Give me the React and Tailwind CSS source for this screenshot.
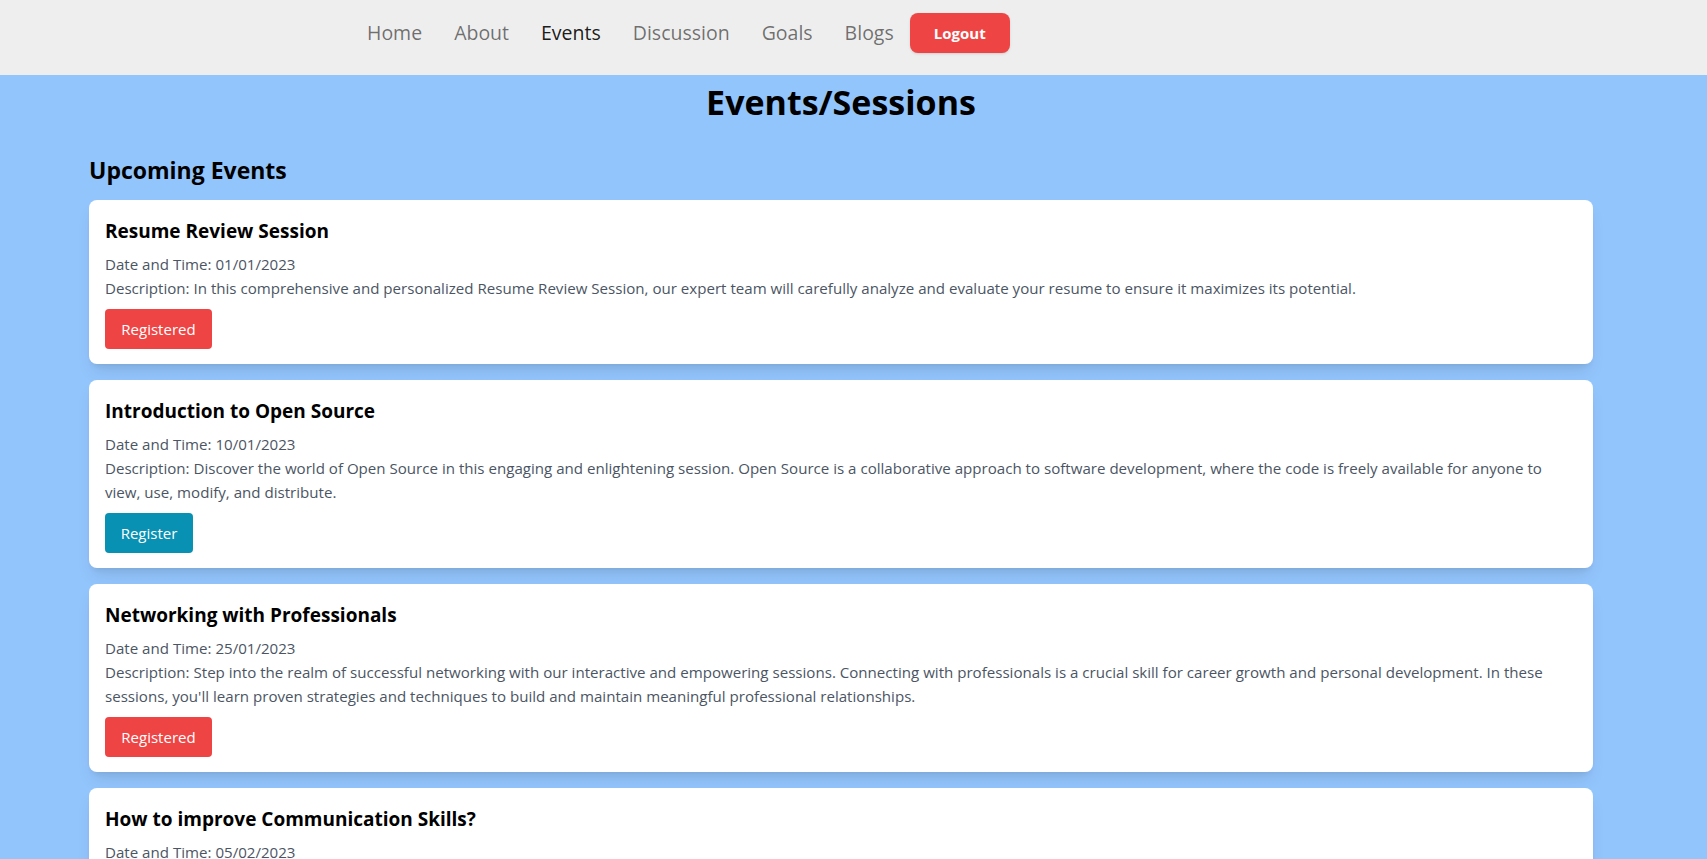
import React from 'react';

const font = { fontFamily: '"Segoe UI", "Open Sans", "Liberation Sans", sans-serif' };

const navLinks = ['Home', 'About', 'Events', 'Discussion', 'Goals', 'Blogs'];

const events = [
  {
    title: 'Resume Review Session',
    date: '01/01/2023',
    description:
      'In this comprehensive and personalized Resume Review Session, our expert team will carefully analyze and evaluate your resume to ensure it maximizes its potential.',
    registered: true,
  },
  {
    title: 'Introduction to Open Source',
    date: '10/01/2023',
    description:
      'Discover the world of Open Source in this engaging and enlightening session. Open Source is a collaborative approach to software development, where the code is freely available for anyone to view, use, modify, and distribute.',
    registered: false,
  },
  {
    title: 'Networking with Professionals',
    date: '25/01/2023',
    description:
      "Step into the realm of successful networking with our interactive and empowering sessions. Connecting with professionals is a crucial skill for career growth and personal development. In these sessions, you'll learn proven strategies and techniques to build and maintain meaningful professional relationships.",
    registered: true,
  },
  {
    title: 'How to improve Communication Skills?',
    date: '05/02/2023',
    description:
      'Learn how to express your ideas clearly and confidently, listen actively, and build strong connections with the people around you.',
    registered: false,
  },
];

const EventCard = ({ event }) => (
  <div className="bg-white rounded-lg shadow-lg px-4 pt-[17px] pb-[15px] mb-4">
    <h3 className="text-[19px] font-bold text-black leading-7 mb-[7px]">{event.title}</h3>
    <p className="text-[15.1px] text-[#4b5563] leading-6">Date and Time: {event.date}</p>
    <p className="text-[15.1px] text-[#4b5563] leading-6">Description: {event.description}</p>
    {event.registered ? (
      <button className="mt-[9px] h-10 w-[107px] rounded bg-[#ef4444] text-white text-[15px]">Registered</button>
    ) : (
      <button className="mt-[9px] h-10 w-[88px] rounded bg-[#0891b2] text-white text-[15px]">Register</button>
    )}
  </div>
);

export default function App() {
  return (
    <div className="min-h-screen bg-[#93c5fd]" style={font}>
      <nav className="h-[75px] bg-[#eeeeee] flex items-start pt-[13px] pl-[351px]">
        {navLinks.map((link) => (
          <a
            key={link}
            href="#"
            className={`h-10 px-4 flex items-center text-[19.5px] ${
              link === 'Events' ? 'text-black/90' : 'text-black/55'
            }`}
          >
            {link}
          </a>
        ))}
        <button className="h-10 w-[100px] rounded-lg bg-[#ef4444] text-white font-bold text-[15px] shadow-sm">
          Logout
        </button>
      </nav>

      <main className="pl-[89px] pr-[114px]">
        <h1 className="text-[34px] font-bold text-black text-center leading-10 pt-[7px]">Events/Sessions</h1>
        <h2 className="text-[23px] font-bold text-black mt-[32px] mb-[14px] leading-8">Upcoming Events</h2>
        {events.map((event) => (
          <EventCard key={event.title} event={event} />
        ))}
      </main>
    </div>
  );
}
